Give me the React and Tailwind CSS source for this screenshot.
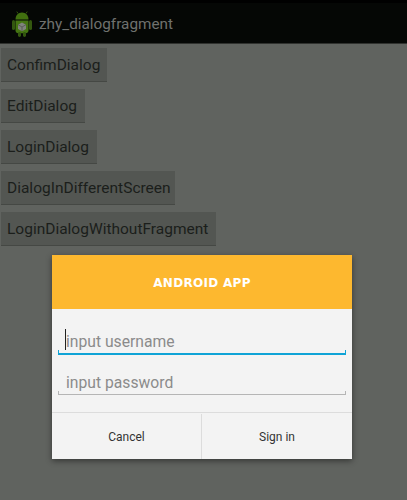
import React from 'react';

const buttons = [
  { label: 'ConfimDialog', width: 'w-[106px]' },
  { label: 'EditDialog', width: 'w-[84px]' },
  { label: 'LoginDialog', width: 'w-[96px]' },
  { label: 'DialogInDifferentScreen', width: 'w-[174px]' },
  { label: 'LoginDialogWithoutFragment', width: 'w-[215px]' },
];

const AndroidIcon = () => (
  <svg width="20" height="26" viewBox="0 0 20 26" className="shrink-0">
    <rect x="0" y="9" width="3" height="10" rx="1.500" fill="#33570f" />
    <rect x="17" y="9" width="3" height="10" rx="1.500" fill="#33570f" />
    <path d="M3.500 8.500C3.500 4.500 6 1.500 10 1.500s6.500 3 6.500 7z" fill="#41700f" />
    <path d="M6 2.500 4.800 0.600M14 2.500l1.200-1.900" stroke="#41700f" strokeWidth="0.8" />
    <path d="M3.500 9.500h13v10c0 1.600-1.200 2.800-2.800 2.800H6.300c-1.600 0-2.800-1.200-2.800-2.800z" fill="#457512" />
    <rect x="6" y="21" width="3" height="5" rx="1.400" fill="#33570f" />
    <rect x="11" y="21" width="3" height="5" rx="1.400" fill="#33570f" />
    <path d="M10 11.500l4 2.200v4.400l-4 2.200-4-2.200v-4.400z" fill="#80837d" />
    <path d="M6 13.700l4 2.300 4-2.300M10 16v4.300" stroke="#4a4d48" strokeWidth="0.7" fill="none" />
  </svg>
);

export default function App() {
  return (
    <div className="relative h-[500px] w-[407px] overflow-hidden bg-[#60635f] font-['Roboto',sans-serif]">
      <div className="flex h-[44px] items-center gap-[7px] border-t-[3px] border-b border-t-black border-b-[#30322f] bg-[#050705] pt-[2px] pl-[12px]">
        <AndroidIcon />
        <span className="text-[15.3px] text-[#6f716e]">zhy_dialogfragment</span>
      </div>

      <div className="flex flex-col items-start gap-[7px] pt-[4px] pl-[1px]">
        {buttons.map(({ label, width }) => (
          <button
            key={label}
            className={`flex h-[34px] items-center border-b border-b-[#454844] bg-[#535652] pt-[2px] pl-[6px] text-[15.5px] whitespace-nowrap text-[#1b1e1b] ${width}`}
          >
            {label}
          </button>
        ))}
      </div>

      <div className="absolute top-[255px] left-[52px] flex h-[204px] w-[300px] flex-col bg-[#f3f3f3] shadow-[0_2px_6px_rgba(0,0,0,0.45)]">
        <div className="flex h-[54px] items-center justify-center bg-[#fdb82f] pt-[2px] font-['DejaVu_Sans',sans-serif] text-[12px] font-bold tracking-[0.3px] text-white">
          ANDROID APP
        </div>

        <div className="flex flex-1 flex-col px-[6px] pt-[17px]">
          <div className="relative flex h-[29px] items-center border-b-2 border-b-[#0fa3d6] pt-[5px] pl-[8px] text-[15.7px] text-[#8b8b8b]">
            <span className="absolute top-[3px] left-[7px] h-[21px] w-px bg-[#222]" />
            <span className="absolute bottom-0 left-0 h-[3px] w-px bg-[#0fa3d6]" />
            <span className="absolute right-0 bottom-0 h-[3px] w-px bg-[#0fa3d6]" />
            input username
          </div>
          <div className="relative mt-[11px] flex h-[29px] items-center border-b border-b-[#b5b5b5] pt-[6px] pl-[8px] text-[15.7px] text-[#8b8b8b]">
            <span className="absolute bottom-0 left-0 h-[3px] w-px bg-[#b5b5b5]" />
            <span className="absolute right-0 bottom-0 h-[3px] w-px bg-[#b5b5b5]" />
            input password
          </div>
        </div>

        <div className="flex h-[47px] border-t border-t-[#dcdcdc] pt-[1px] text-[12px] text-[#333]">
          <div className="flex w-[150px] items-center justify-center border-r border-r-[#dcdcdc]">Cancel</div>
          <div className="flex flex-1 items-center justify-center">Sign in</div>
        </div>
      </div>
    </div>
  );
}
